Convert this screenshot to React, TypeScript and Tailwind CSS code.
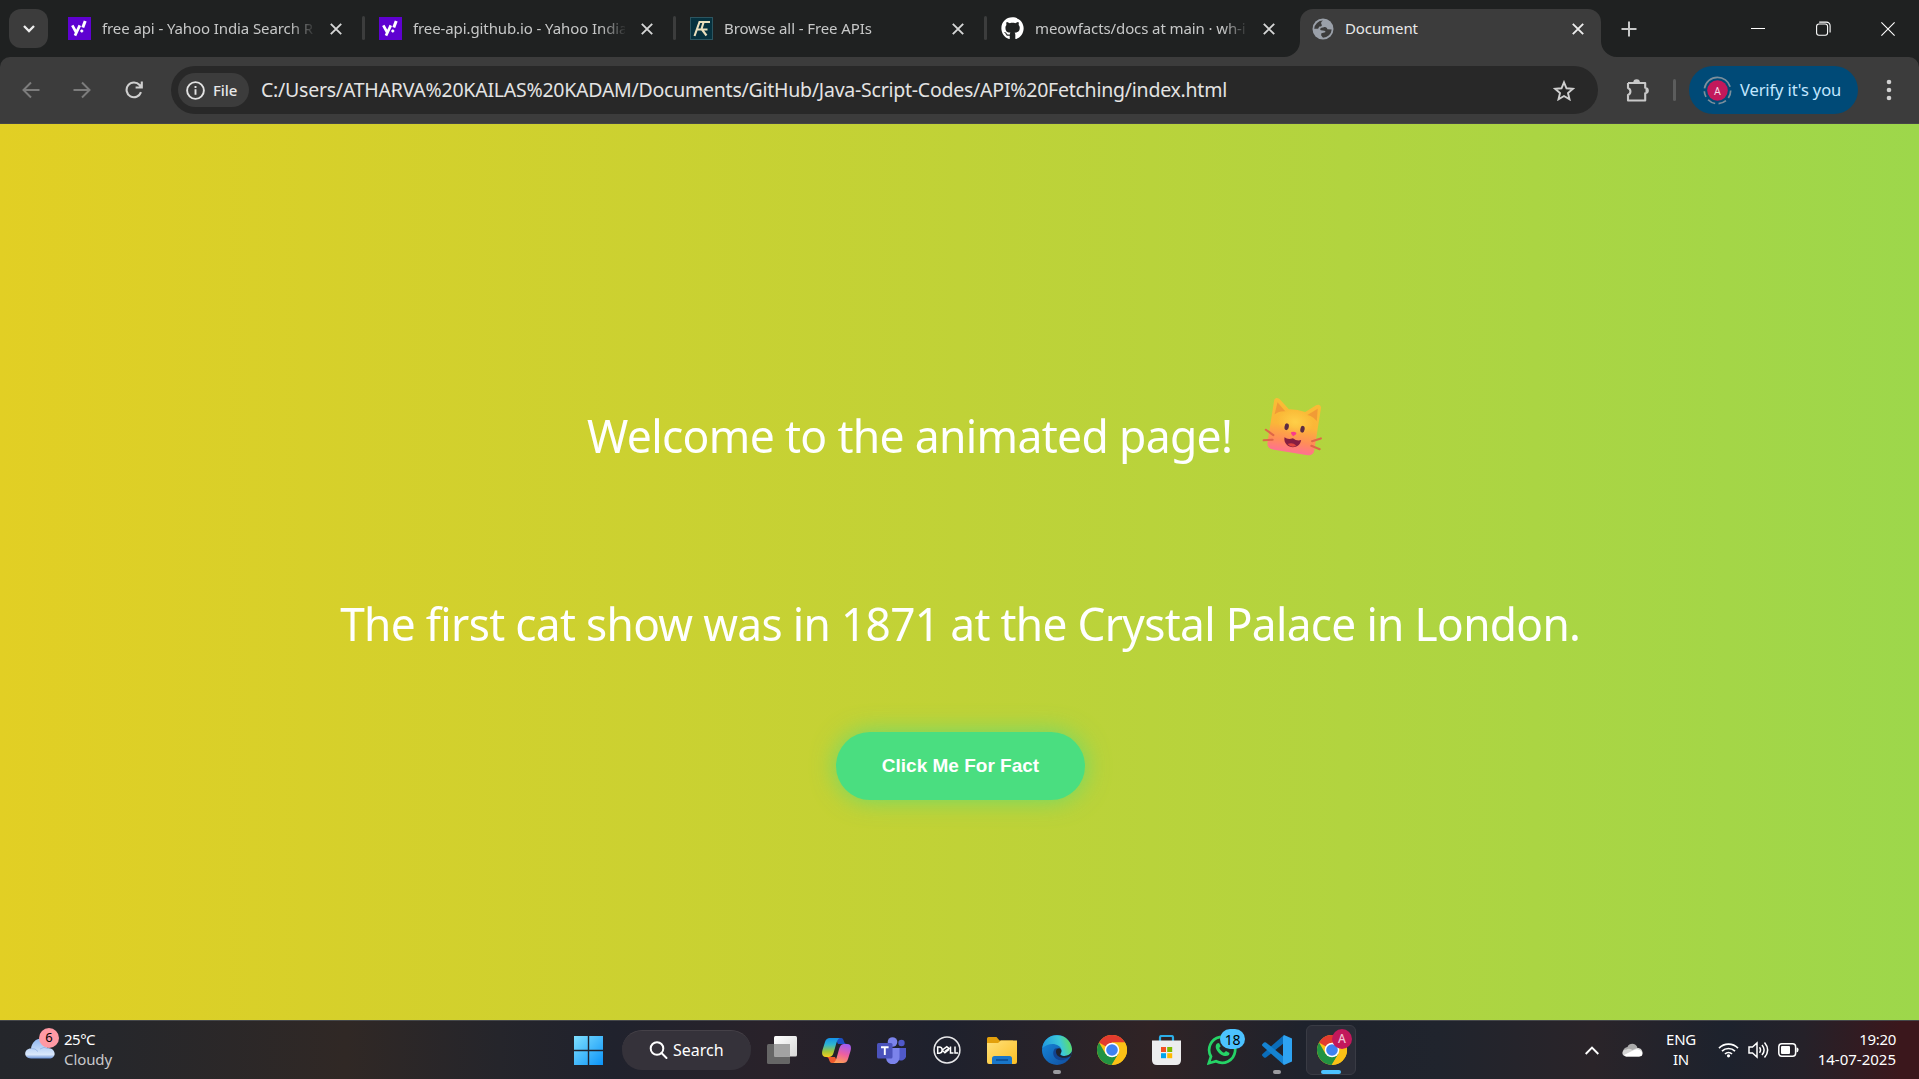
import React from "react";
import { FaGithub } from "react-icons/fa";

const X = ({ bold = false, size = 12 }: { bold?: boolean; size?: number }) => (
  <svg width={size} height={size} viewBox="0 0 12 12" stroke={bold ? "#ececec" : "#d5d6d6"} strokeWidth="1.9" fill="none">
    <path d="M.8 .8 11.2 11.2M11.2 .8.8 11.2" />
  </svg>
);

const Yahoo = () => (
  <div className="flex h-[23px] w-[23px] items-center justify-center bg-[#5f01d1]">
    <svg width="19" height="19" viewBox="0 0 19 19" fill="none" stroke="#fff">
      <path d="M2.3 6.4 6 13M9.8 6.4 5 16.6" strokeWidth="2.7" />
      <path d="M15.2 2 12.8 8.6" strokeWidth="3" />
      <circle cx="11.8" cy="12" r="1.2" fill="#fff" strokeWidth=".7" />
    </svg>
  </div>
);

const FreeApis = () => (
  <svg width="23" height="23" viewBox="0 0 23 23" fill="none">
    <rect x=".5" y=".5" width="22" height="22" fill="#06323f" stroke="#2c5560" />
    <path d="M4.500 19 9.500 5H20M13.500 5.500 11.500 12l5 6.500M7 12.500H17.500" stroke="#eadfbd" strokeWidth="2.100" />
  </svg>
);

const Globe = () => (
  <svg width="22" height="22" viewBox="0 0 22 22">
    <circle cx="11" cy="11" r="10.5" fill="#9aa0a9" />
    <path d="M11 2.6C9 4 8.6 5 9.6 6.4c.8 1.2-.3 2.2-1.8 2.2-1.3 0-.7 2.1-2 2.1H2.2A8.8 8.8 0 0 1 11 2.6ZM12 9.2c2-.4 3.2.7 3.3 2.1l4.4.2a8.8 8.8 0 0 1-8.7 8.2l-1.8-2.1v-1.8c0-.8 2-1 3.1-1.2 1.6-.3 1.5-1.6.1-1.9l-3.6-.5c-1-.2-.8-2.2.7-2.4Z" fill="#3c3c3c" />
  </svg>
);

const TabItem = ({ icon, label, divider }: { icon: React.ReactNode; label: string; divider?: boolean }) => (
  <div className="relative flex h-[57px] w-[311px] shrink-0 items-center pl-[11px]">
    <div className="w-[23px]">{icon}</div>
    <div className="ml-[11px] w-[212px] whitespace-nowrap tracking-[-0.1px] [mask-image:linear-gradient(90deg,#000_188px,transparent_214px)]">{label}</div>
    <div className="ml-4 flex"><X /></div>
    {divider && <div className="absolute right-[3px] top-4 h-6 w-[3px] rounded-full bg-[#3c3d3d]" />}
  </div>
);

const TopBar = () => (
  <div className="flex h-[57px] bg-[#1f2121] text-[15px] text-[#c7c8c8]">
    <div className="flex w-[57px] shrink-0 items-center pl-[9px]">
      <div className="flex h-[39px] w-[39px] items-center justify-center rounded-xl bg-[#3c3c3c]">
        <svg width="12" height="8" viewBox="0 0 12 8" fill="none" stroke="#eee" strokeWidth="2.3"><path d="m1 1 5 5 5-5" /></svg>
      </div>
    </div>
    <TabItem icon={<Yahoo />} divider label="free api - Yahoo India Search R" />
    <TabItem icon={<Yahoo />} divider label="free-api.github.io - Yahoo India" />
    <TabItem icon={<FreeApis />} divider label="Browse all - Free APIs" />
    <TabItem icon={<FaGithub size={23} color="#fff" />} label="meowfacts/docs at main · wh-i" />
    <div className="relative -ml-px mt-[9px] flex h-12 w-[301px] shrink-0 items-center rounded-t-[13px] bg-[#3c3c3c] pb-[9px] pl-3 text-[#e8e8e8]">
      <svg className="absolute -left-4 bottom-0" width="16" height="16"><path d="M16 0v16H0A16 16 0 0 0 16 0" fill="#3c3c3c" /></svg>
      <svg className="absolute -right-4 bottom-0" width="16" height="16"><path d="M0 0v16h16A16 16 0 0 1 0 0" fill="#3c3c3c" /></svg>
      <Globe />
      <span className="ml-[11px] w-[227px] tracking-[-0.1px]">Document</span>
      <X bold />
    </div>
    <div className="ml-5 flex h-[57px] items-center">
      <svg width="16" height="16" stroke="#c7c8c8" strokeWidth="2"><path d="M8 .5v15M.5 8h15" /></svg>
    </div>
    <div className="ml-auto flex h-[57px] items-center pr-[24px]">
      <svg className="mr-[51px]" width="14" height="14" stroke="#fff"><path d="M0 6.5h14" /></svg>
      <svg className="mr-[50px]" width="15" height="15" fill="none" stroke="#fff" strokeWidth="1.1">
        <rect x=".6" y="3" width="11" height="11.2" rx="2.4" /><path d="M3.2 1.1h7.3a3.6 3.6 0 0 1 3.6 3.6v6.8" />
      </svg>
      <svg width="14" height="14" stroke="#fff" strokeWidth="1.1"><path d="m.4.4 13.2 13.2M13.6.4.4 13.6" /></svg>
    </div>
  </div>
);

const Toolbar = () => (
  <div className="bg-[#1f2121]">
    <div className="flex h-[67px] items-center rounded-t-[10px] border-b border-[#464646] bg-[#3c3c3c] pl-[22px]">
      <svg width="18" height="18" fill="none" stroke="#7c7c7c" strokeWidth="2"><path d="M17.5 9H2M9 1.5 1.5 9 9 16.5" /></svg>
      <svg className="ml-[33px]" width="18" height="18" fill="none" stroke="#7c7c7c" strokeWidth="2"><path d="M.5 9H16M9 1.5 16.5 9 9 16.5" /></svg>
      <svg className="ml-[34px]" width="18" height="18" fill="none" stroke="#cfcfcf" strokeWidth="2.1"><path d="M16 11.2A7.4 7.4 0 1 1 14.6 4l1.6 2M16.8 .5v6H10.6" /></svg>
      <div className="ml-[28px] flex h-12 w-[1427px] items-center rounded-full bg-[#282828] pl-[7px]">
        <div className="flex h-[34px] w-[71px] items-center rounded-full bg-[#3c3c3c] pl-2">
          <svg width="19" height="19" fill="none" stroke="#e3e3e3" strokeWidth="1.9"><circle cx="9.5" cy="9.5" r="8.4" /><path d="M9.5 8.3v5.4M9.5 5v2" /></svg>
          <span className="ml-2 text-[15px] font-medium tracking-[-0.1px] text-[#e8e8e8]">File</span>
        </div>
        <span className="ml-3 w-[966px] whitespace-nowrap text-[19.5px] tracking-[-0.24px] text-[#e3e3e3]">C:/Users/ATHARVA%20KAILAS%20KADAM/Documents/GitHub/Java-Script-Codes/API%20Fetching/index.html</span>
        <svg className="ml-[326px]" width="22" height="21" viewBox="0 0 22 21" fill="none" stroke="#d0d0d0" strokeWidth="1.9"><path d="m11 2.3 2.5 6 6.4.5-4.9 4.2 1.5 6.3L11 16l-5.5 3.3L7 13 2.1 8.8l6.4-.5z" /></svg>
      </div>
      <svg className="ml-[27px]" width="25" height="25" fill="none">
        <path d="M3 5h17.2v5.5M20.200 14.500V22.500H3v-5.600a3.600 3.600 0 0 0 0-6.800V5" stroke="#c9c9c9" strokeWidth="2.1" strokeLinejoin="round" />
        <path d="M9 4.500a2.600 2.600 0 0 1 5.200 0M20.500 10a2.600 2.600 0 0 1 0 5.200" stroke="#c9c9c9" strokeWidth="1.500" fill="#c9c9c9" />
      </svg>
      <div className="ml-[23px] h-[22px] w-[3px] rounded-full bg-[#5c5d5d]" />
      <div className="ml-[13px] flex h-12 w-[169px] items-center rounded-full bg-[#004a77] pl-[14px]">
        <svg width="29" height="29">
          <circle cx="14.500" cy="14.500" r="13.200" fill="none" stroke="#7c8f9c" strokeWidth="1.700" strokeDasharray="8 3.500 8 3.500 8 3.500 6 3 35 4" />
          <circle cx="14.500" cy="14.500" r="10.300" fill="#c2185b" />
          <text x="14.500" y="18.500" fontSize="10.500" textAnchor="middle" fill="#f6dce6" fontFamily="Roboto">A</text>
        </svg>
        <span className="ml-2 whitespace-nowrap text-[16.5px] tracking-[-0.12px] text-[#c2e7ff]">Verify it's you</span>
      </div>
      <svg className="ml-[28px]" width="6" height="22" fill="#d0d0d0"><circle cx="3" cy="3" r="2.300" /><circle cx="3" cy="11" r="2.300" /><circle cx="3" cy="19" r="2.300" /></svg>
    </div>
  </div>
);

const Cat = () => (
  <svg width="66" height="66" viewBox="0 0 64 64">
    <defs>
      <linearGradient id="fur" x1="0" y1="0" x2="0" y2="1"><stop offset="0" stopColor="#f9bd35" /><stop offset=".48" stopColor="#fbb638" /><stop offset=".78" stopColor="#ff8d58" /><stop offset="1" stopColor="#ff7191" /></linearGradient>
      <radialGradient id="glow"><stop offset="0" stopColor="#ffd24a" stopOpacity=".9" /><stop offset="1" stopColor="#ffd24a" stopOpacity="0" /></radialGradient>
    </defs>
    <g transform="rotate(9 32 32)">
      <path d="M8.500 6c1-3 4-2.500 5.500-1L24 13q8-1.500 16 0l9.500-8c2-1.500 4.500-1 5 1.500V48c0 5-3 6-7 6H16c-5 0-7.500-2-7.500-6z" fill="url(#fur)" />
      <ellipse cx="32" cy="24" rx="18" ry="12" fill="url(#glow)" />
      <path d="M11 20 12 8l9 7.500c-5 .5-7 2-10 4.500M52.500 20l-1-12-9 7.500c5 .5 7 2 10 4.500" fill="#ef9336" opacity=".8" />
      <ellipse cx="24.500" cy="30" rx="2.100" ry="3.300" fill="#5b2c43" /><ellipse cx="40" cy="30" rx="2.100" ry="3.300" fill="#5b2c43" />
      <path d="M29.500 34.500q2.700-1.500 5.400 0 .3 1.500-2.700 3.500-3-2-2.700-3.500" fill="#fa3b8a" />
      <path d="M24 40.500q4 2 8.200-.5 4.200 2.500 8.200.5c0 11-16.400 11-16.400 0" fill="#861e41" />
      <path d="M28 46.500q4-3 8.500 0-4 3.500-8.500 0" fill="#e0453f" />
      <path d="m5 36 8 4M4.500 46.500l8.500-2M59 36l-8 4M59.500 46.500 51 44.500" stroke="#df6648" strokeWidth="2" strokeLinecap="round" />
    </g>
  </svg>
);

const Page = () => (
  <main className="flex h-[896px] flex-col items-center bg-[linear-gradient(90deg,#e2cf24_0%,#c0d237_50%,#9dd74b_100%)] pl-px text-white">
    <div className="mt-[271px] flex h-[80px] w-[746px] items-center">
      <h1 className="w-[674px] origin-left scale-x-[0.966] whitespace-nowrap text-[46px] leading-[64px] tracking-[-0.7px]">Welcome to the animated page!</h1>
      <div className="-mt-[10px]"><Cat /></div>
    </div>
    <p className="mt-[116px] scale-x-[0.961] whitespace-nowrap text-[46px] leading-[64px] tracking-[-0.7px]">The first cat show was in 1871 at the Crystal Palace in London.</p>
    <button className="mt-[77px] h-[68px] w-[249px] rounded-full bg-[#4ade80] pl-px font-['Liberation_Sans',sans-serif] text-[19px] font-bold shadow-[0_0_24px_rgba(74,222,128,0.7)]">Click Me For Fact</button>
  </main>
);

const Chrome = () => (
  <svg width="30" height="30" viewBox="0 0 30 30">
    <circle cx="15" cy="15" r="15" fill="#fbc116" />
    <path d="M15 15 2 7.500A15 15 0 0 1 28 7.500H15z" fill="#e33b2e" />
    <path d="M2 7.500 8.500 18.700 15 22l-.5 8A15 15 0 0 1 2 7.500" fill="#229342" />
    <path d="m21.500 18.700-7 11.300L10 20z" fill="#229342" />
    <path d="M21.500 18.700 15 30A15 15 0 0 0 28 7.500H15z" fill="#fbc116" />
    <circle cx="15" cy="15" r="7.300" fill="#fff" /><circle cx="15" cy="15" r="5.800" fill="#3e82f1" />
  </svg>
);

const Slot = ({ children }: { children: React.ReactNode }) => (
  <div className="relative flex h-[50px] w-[55px] shrink-0 items-center justify-center">{children}</div>
);
const Dot = () => <div className="absolute bottom-[1px] left-[24px] h-1 w-2 rounded-full bg-[#9b9ba0]" />;

const Taskbar = () => (
  <footer className="flex h-[59px] border-t border-[#45474a] bg-[linear-gradient(90deg,#24262b_0%,#26272b_6%,#302825_18%,#25252b_26%,#20222d_32%,#29222a_40%,#1e212d_49%,#302325_60%,#1e222c_68%,#20242d_75%,#2a2429_83%,#1d222d_90%,#252129_94%,#3b171c_99%)] text-[15px] text-white">
    <div className="flex w-[561px] shrink-0 pl-[25px] pt-[8px]">
      <div className="relative h-[40px] w-[39px]">
        <svg className="mt-[8px]" width="30" height="22" viewBox="0 0 30 22">
          <defs><linearGradient id="cl" x1="0" y1="0" x2="0" y2="1"><stop stopColor="#90b8f2" /><stop offset=".8" stopColor="#dae8fb" /><stop offset="1" stopColor="#6b93d8" /></linearGradient></defs>
          <path d="M6 21.500c-8 0-7.500-10 0-10C7 5 12 1 16 2c5 1 6 6 6.500 9 9 0 9.500 10.500 1.500 10.500z" fill="url(#cl)" />
          <path d="M6 11.500q4.500-.5 7 3M15 12q4-3 8-.5" fill="none" stroke="#9ab9ea" />
        </svg>
        <div className="absolute left-[14px] top-[-1px] flex h-5 w-5 items-center justify-center rounded-full bg-[#ff99a4] text-[13px] text-black">6</div>
      </div>
      <div className="leading-5"><div className="tracking-[-0.5px]">25°C</div><div className="tracking-[-0.1px] text-[#c8c8ca]">Cloudy</div></div>
    </div>
    <div className="flex w-[800px] shrink-0 items-start pt-[4px]">
      <Slot>
        <svg width="29" height="29"><defs><linearGradient id="w" x1="0" y1="0" x2="1" y2="1"><stop stopColor="#7fe0ff" /><stop offset="1" stopColor="#0b93f7" /></linearGradient></defs>
          <path d="M0 0h13.800v13.800H0zM15.200 0H29v13.800H15.200zM0 15.200h13.800V29H0zM15.200 15.200H29V29H15.200z" fill="url(#w)" /></svg>
      </Slot>
      <div className="ml-[6px] mt-[5px] flex h-10 w-[129px] shrink-0 items-center rounded-full border-t border-[#454148] bg-[#35323a] pl-[27px]">
        <svg width="19" height="19" fill="none" stroke="#fff" strokeWidth="2"><circle cx="8" cy="7.500" r="6.300" /><path d="m12.500 12 5 5" strokeLinecap="round" /></svg>
        <span className="ml-[5px] pb-[2px] text-[16px]">Search</span>
      </div>
      <div className="ml-[3px] flex">
        <Slot><svg width="30" height="28"><defs><linearGradient id="tv" x1="0" y1="0" x2="1" y2="1"><stop stopColor="#fff" /><stop offset="1" stopColor="#d8d8d8" /></linearGradient></defs><rect x="0" y="8" width="23" height="20" rx="1.500" fill="#666" /><rect x="7" y="0" width="23" height="20.500" rx="1.500" fill="url(#tv)" /><path d="M7 8h16v12.500H7z" fill="#a2a2a2" /></svg></Slot>
        <Slot>
          <svg width="29" height="25" viewBox="0 0 29 25">
            <defs>
              <linearGradient id="c1" x1="0" y1="0" x2="0" y2="1"><stop stopColor="#1492ea" /><stop offset=".35" stopColor="#2fb5d0" /><stop offset=".7" stopColor="#9fc63a" /><stop offset="1" stopColor="#f7ce20" /></linearGradient>
              <linearGradient id="c2" x1=".6" y1="0" x2=".3" y2="1"><stop stopColor="#a45cf0" /><stop offset=".5" stopColor="#ee5fa0" /><stop offset="1" stopColor="#ffa055" /></linearGradient>
            </defs>
            <path d="M13 0h6c2 0 2.500 2 3 3.500S23 6 25 6h-9z" fill="#1c4fc4" />
            <path d="M16 25h-6c-2 0-2.500-2-3-3.500S6 19 4 19h9z" fill="#ef5a2e" />
            <path d="M8 0h10c-3 1-3.500 5-5 10s-2 9-6 9H4c-4 0-4.500-3-3.500-7L3 4C4 1 5.500 0 8 0" fill="url(#c1)" />
            <path d="M21 25H11c3-1 3.500-5 5-10s2-9 6-9h3c4 0 4.500 3 3.500 7L26 21c-1 3-2.500 4-5 4" fill="url(#c2)" />
          </svg>
        </Slot>
        <Slot>
          <svg width="30" height="27"><circle cx="15.500" cy="5" r="4.800" fill="#7b83eb" /><circle cx="24.500" cy="6" r="3.200" fill="#5059c9" /><path d="M21 11h8v8.500a5 5 0 0 1-8 3z" fill="#5059c9" /><path d="M9 11h13.500v9a6.700 6.700 0 0 1-13.500 1z" fill="#7b83eb" /><rect x="0" y="6" width="15.500" height="15.500" rx="1.500" fill="#4b53bc" /><path d="M4 10.200h7.600M7.800 10v8" stroke="#fff" strokeWidth="1.900" /></svg>
        </Slot>
        <Slot>
          <svg width="28" height="28"><circle cx="14" cy="14" r="12.900" fill="none" stroke="#e8e8ea" strokeWidth="1.500" /><g fill="none" stroke="#fff" strokeWidth="1.500"><path d="M4.700 11v6.200h1.500c4 0 4-6.200 0-6.200zM9.300 14l4.500-3.300 2.300 1.700-4 3M9.300 14l2.600 2.700 4.200-3.200M17.500 10.500v6.600h3M22 10.500v6.600h3" /></g></svg>
        </Slot>
        <Slot>
          <svg width="30" height="27"><defs><linearGradient id="fo" x1="0" y1="0" x2="1" y2="1"><stop stopColor="#ffe07a" /><stop offset="1" stopColor="#fbbf24" /></linearGradient></defs><path d="M0 1.500Q0 0 1.500 0h8l3 3.500H26V12H0z" fill="#e3a00c" /><path d="M0 6h11l3-2.500h16V25q0 2-2 2H2q-2 0-2-2z" fill="url(#fo)" /><path d="M5 27v-5.500Q5 19 7.500 19h15q2.500 0 2.500 2.500V27z" fill="#1976c9" /><path d="M9 23h12" stroke="#0a4a8e" strokeWidth="1.500" /></svg>
        </Slot>
        <Slot>
          <svg width="30" height="30">
            <defs><linearGradient id="e1" x1="0" y1=".5" x2="1" y2=".3"><stop stopColor="#2098e0" /><stop offset=".6" stopColor="#3cc8d8" /><stop offset="1" stopColor="#63df55" /></linearGradient><linearGradient id="e2" x1="0" y1="0" x2="1" y2="1"><stop stopColor="#168ee0" /><stop offset="1" stopColor="#114a9c" /></linearGradient></defs>
            <circle cx="15" cy="15" r="15" fill="url(#e2)" />
            <path d="M.4 13C2-3 27-5 30 14c0 7-8 8-11 6-2-1.500 1-2 .5-5C18.500 9 8 6 .4 13" fill="url(#e1)" />
            <path d="M12.500 14c-4 6 2 13 9 11 3-.5 6-3 7.500-4.500C22 23 17 21 17.500 17c.5-3-3-5-5-3" fill="#12438f" />
            <path d="M14 16c-.5 6 7 9 14.500 5l2-5.500C29 21 21 22 18.500 20c-1-1 1.500-2 .7-5-1-3-5-2-5.200 1" fill="#20222c" />
          </svg><Dot />
        </Slot>
        <Slot><Chrome /></Slot>
        <Slot>
          <svg width="29" height="30"><path d="M8 8V2.500Q8 1 9.500 1h10Q21 1 21 2.500V8" fill="none" stroke="#2caee8" strokeWidth="2.200" /><path d="M0 5.500h29V25q0 5-5 5H5q-5 0-5-5z" fill="#ededee" /><path d="M9 12h5v5H9z" fill="#f25022" /><path d="M15.200 12h5v5h-5z" fill="#7fba00" /><path d="M9 18.200h5v5H9z" fill="#00a4ef" /><path d="M15.200 18.200h5v5h-5z" fill="#ffb900" /></svg>
        </Slot>
        <Slot>
          <svg width="30" height="30" fill="none"><path d="M1.800 28.200 4 21.500A13 13 0 1 1 9 26.300z" stroke="#25d366" strokeWidth="2.700" /><path d="M10 8.500c-5 5 6 16 12 11.500l.5-2-3.500-2-2 1.700c-2-.7-4-2.700-4.800-4.700l1.500-1.700L12 8z" fill="#25d366" /></svg>
          <div className="absolute left-[26px] top-[4px] flex h-5 w-[25px] items-center justify-center rounded-full bg-[#4cc2ff] text-[14px] tracking-[-0.3px] text-black">18</div>
        </Slot>
        <Slot>
          <svg width="30" height="30"><path d="M22 0v8L4 22.500q-1 .7-2 0L.5 21q-1-1 0-2z" fill="#0a6dba" /><path d="M22 30v-8L4 7.500q-1-.7-2 0L.5 9q-1 1 0 2z" fill="#1483d2" /><path d="M22 0 30 3.500v23L22 30l-1-2V2z" fill="#2ea3f2" /></svg><Dot />
        </Slot>
        <Slot>
          <div className="absolute left-[2px] top-0 h-[50px] w-[50px] rounded-[6px] border border-[#393b44] bg-[#2b2d37]" />
          <div className="relative"><Chrome /></div>
          <div className="absolute left-[28px] top-[4px] flex h-5 w-5 items-center justify-center rounded-full bg-[#c2185b] text-[12px] font-medium text-[#f0c4d5]">A</div>
          <div className="absolute bottom-[1px] left-[17px] h-1 w-5 rounded-full bg-[#4cc2ff]" />
        </Slot>
      </div>
    </div>
    <div className="ml-auto flex items-center pr-[23px]">
      <svg width="14" height="9" fill="none" stroke="#fff" strokeWidth="1.900"><path d="m.7 8 6.300-6.300L13.300 8" /></svg>
      <svg className="ml-[23px]" width="21" height="14"><path d="M1 8Q2 4.500 5.500 4C7-.5 14-.5 15.500 4.500l-4 3z" fill="#aaa" /><path d="M4 13.500C-1 13-.8 6.500 4.500 6.500Q7 5 10.500 7l4-2C22 4 22 13.500 17 13.500z" fill="#d4d4d4" /><path d="m2 12 10-5q5-2 8 2 1.500 4.500-3 4.500H4z" fill="#fff" /></svg>
      <div className="ml-[22px] w-[32px] pb-[2px] text-center leading-5 tracking-[-0.3px]"><div>ENG</div><div>IN</div></div>
      <svg className="ml-[21px]" width="21" height="16" fill="none" stroke="#fff" strokeWidth="1.700"><path d="M1 6.200a13.300 13.300 0 0 1 19 0M4 9.200a9.200 9.200 0 0 1 13 0M7 12a5 5 0 0 1 7 0" /><circle cx="10.500" cy="13.800" r="1.600" fill="#fff" stroke="none" /></svg>
      <svg className="ml-[9px]" width="21" height="18" fill="none" stroke="#fff" strokeWidth="1.500"><path d="M1 6v6h3.500L9 16V2L4.500 6zM11.500 6.200q2 2.800 0 5.600M14 3.900q4.200 5.100 0 10.200M16.500 1.500q6.300 7.500 0 15" /></svg>
      <svg className="ml-[9px]" width="21" height="14"><rect x=".8" y=".8" width="16.800" height="12.400" rx="3" fill="none" stroke="#fff" strokeWidth="1.500" /><rect x="3" y="3" width="9" height="8" rx="1" fill="#fff" /><path d="M18.500 4.500q2.500.5 2 2.500 0 2-2 2.500z" fill="#fff" /></svg>
      <div className="ml-[19px] w-[78px] whitespace-nowrap pb-[2px] text-right leading-5"><div className="tracking-[-0.3px]">19:20</div><div className="-ml-4">14-07-2025</div></div>
    </div>
  </footer>
);

export default function App() {
  return (
    <div className="flex h-[1079px] w-[1919px] flex-col overflow-hidden font-['Noto_Sans','Open_Sans',sans-serif]">
      <TopBar />
      <Toolbar />
      <Page />
      <Taskbar />
    </div>
  );
}
